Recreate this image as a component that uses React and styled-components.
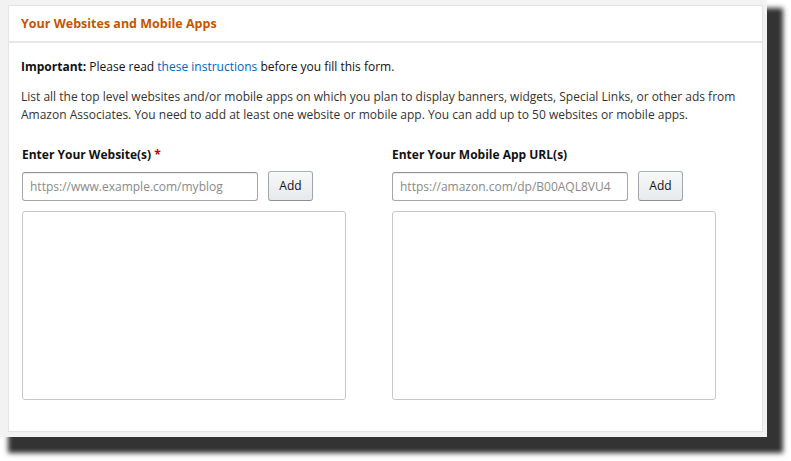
import React from 'react';
import styled, {createGlobalStyle} from 'styled-components';

const GlobalStyle = createGlobalStyle`
  body {
    margin: 0;
    background: #fff;
    font-family: "Open Sans", "Liberation Sans", Arial, sans-serif;
    color: #111;
  }
`;

// leaves room under the frame so its drop shadow is part of the page
const Page = styled.div`
  min-height: 461px;
  padding-bottom: 24px;
  box-sizing: border-box;
`;

const Frame = styled.div`
  box-sizing: border-box;
  width: 767px;
  height: 437px;
  padding: 5px 4px 5px 8px;
  background: #f2f2f2;
  box-shadow: 12px 12px 5px 4px #333;
`;

const Card = styled.section`
  box-sizing: border-box;
  height: 100%;
  background: #fff;
  border: 1px solid #e3e3e3;
`;

const CardHeader = styled.header`
  display: flex;
  align-items: center;
  height: 35px;
  padding: 0 12px;
  border-bottom: 2px solid #e7e7e7;
`;

const Title = styled.h2`
  margin: 0;
  font-size: 12.5px;
  font-weight: 700;
  color: #c45500;
`;

const CardBody = styled.div`
  padding: 14px 12px;
  font-size: 12px;
  line-height: 18px;
`;

const Notice = styled.p`
  margin: 0 0 12px;
  line-height: 19px;
`;

const Intro = styled.p`
  margin: 0 0 21px;
  color: #333;
`;

const Link = styled.a`
  color: #0066c0;
  text-decoration: none;
`;

const Columns = styled.div`
  display: grid;
  grid-template-columns: 370px 370px;
  padding-left: 1px;
`;

const Label = styled.label`
  display: block;
  margin-bottom: 7px;
  font-weight: 700;
  line-height: 19px;
`;

const Required = styled.span`
  color: #c40000;
`;

const AddRow = styled.div`
  display: flex;
  align-items: center;
  gap: 10px;
  margin-bottom: 10px;
`;

const UrlInput = styled.input`
  box-sizing: border-box;
  width: 236px;
  height: 29px;
  padding: 3px 7px;
  border: 1px solid #a6a6a6;
  border-top-color: #949494;
  border-radius: 3px;
  box-shadow: 0 1px 0 rgba(255, 255, 255, 0.5), 0 1px 0 rgba(0, 0, 0, 0.07) inset;
  font: inherit;
  font-size: 12px;
  color: #111;

  &::placeholder {
    color: #8a8a8a;
  }
`;

const AddButton = styled.button`
  box-sizing: border-box;
  width: 45px;
  height: 30px;
  padding: 0;
  border: 1px solid #adb1b8;
  border-color: #adb1b8 #a2a6ac #8d9096;
  border-radius: 3px;
  background: linear-gradient(to bottom, #f7f8fa, #e7e9ec);
  box-shadow: 0 1px 0 rgba(255, 255, 255, 0.6) inset;
  font: inherit;
  font-size: 12px;
  color: #111;
`;

const UrlList = styled.textarea`
  box-sizing: border-box;
  display: block;
  width: 324px;
  height: 189px;
  border: 1px solid #c8c8c8;
  border-radius: 3px;
  resize: none;
  font: inherit;
`;

const UrlField = ({label, required, placeholder}) => (
  <div>
    <Label>
      {label} {required && <Required>*</Required>}
    </Label>
    <AddRow>
      <UrlInput placeholder={placeholder} />
      <AddButton type="button">Add</AddButton>
    </AddRow>
    <UrlList />
  </div>
);

const App = () => (
  <Page>
    <GlobalStyle />
    <Frame>
      <Card>
        <CardHeader>
          <Title>Your Websites and Mobile Apps</Title>
        </CardHeader>
        <CardBody>
          <Notice>
            <b>Important:</b> Please read <Link href="#">these instructions</Link> before you fill this form.
          </Notice>
          <Intro>
            List all the top level websites and/or mobile apps on which you plan to display banners, widgets, Special Links, or other ads from
            <br />
            Amazon Associates. You need to add at least one website or mobile app. You can add up to 50 websites or mobile apps.
          </Intro>
          <Columns>
            <UrlField label="Enter Your Website(s)" required placeholder="https://www.example.com/myblog" />
            <UrlField label="Enter Your Mobile App URL(s)" placeholder="https://amazon.com/dp/B00AQL8VU4" />
          </Columns>
        </CardBody>
      </Card>
    </Frame>
  </Page>
);

export default App;
